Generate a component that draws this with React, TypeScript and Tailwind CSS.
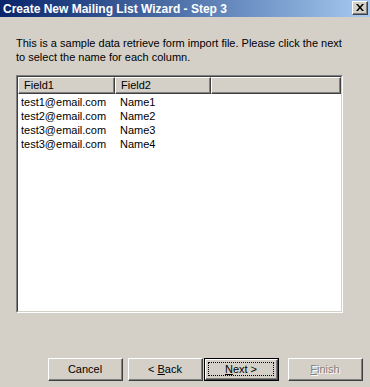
import React from "react";

const font = { fontFamily: '"Liberation Sans", Arial, sans-serif' };

const rows = [
  ["test1@email.com", "Name1"],
  ["test2@email.com", "Name2"],
  ["test3@email.com", "Name3"],
  ["test3@email.com", "Name4"],
];

function Raised({ children, className = "" }: { children?: React.ReactNode; className?: string }) {
  return (
    <div className={"border-t border-l border-t-white border-l-white border-r border-b border-r-[#404040] border-b-[#404040] " + className}>
      <div className="flex h-full w-full items-center justify-center border-r border-b border-r-[#808080] border-b-[#808080]">
        {children}
      </div>
    </div>
  );
}

function Btn({ children, disabled }: { children: React.ReactNode; disabled?: boolean }) {
  return (
    <Raised className="h-[23px] w-[75px] bg-[#d4d0c8]">
      <span className={disabled ? "text-[11px] text-[#808080] [text-shadow:1px_1px_0_#fff]" : "text-[11px] text-black"}>{children}</span>
    </Raised>
  );
}

function HeaderCell({ label, className = "" }: { label?: string; className?: string }) {
  return (
    <div className={"h-[17px] border-t border-l border-t-white border-l-white border-r border-b border-r-[#404040] border-b-[#404040] " + className}>
      <div className="flex h-full items-center border-r border-b border-r-[#808080] border-b-[#808080] pl-[5px] text-[11px]">
        {label}
      </div>
    </div>
  );
}

export default function App() {
  return (
    <div className="flex h-[387px] w-[370px] flex-col overflow-hidden bg-[#d4d0c8] text-black" style={font}>
      <div className="flex h-[17px] items-center justify-between bg-gradient-to-r from-[#0a246a] to-[#a6caf0] pl-[3px] pr-[2px]">
        <span className="text-[12px] font-bold leading-none text-white">Create New Mailing List Wizard - Step 3</span>
        <Raised className="mt-[1px] h-[14px] w-[16px] self-start bg-[#d4d0c8]">
          <svg width="8" height="7" viewBox="0 0 8 7">
            <path d="M0 0h2l2 2.5L6 0h2L5 3.5 8 7H6L4 4.5 2 7H0l3-3.5z" fill="#000" />
          </svg>
        </Raised>
      </div>

      <p className="mt-[19px] ml-[16px] w-[326px] text-[11px] leading-[14px]">
        This is a sample data retrieve form import file. Please click the next to select the name for each column.
      </p>

      <div className="mt-[11px] ml-[16px] h-[238px] w-[327px] border-t border-l border-t-[#808080] border-l-[#808080] border-r border-b border-r-white border-b-white">
        <div className="flex h-full w-full flex-col border-t border-l border-t-[#404040] border-l-[#404040] border-r border-b border-r-[#d4d0c8] border-b-[#d4d0c8] bg-white">
          <div className="flex bg-[#d4d0c8]">
            <HeaderCell label="Field1" className="w-[97px]" />
            <HeaderCell label="Field2" className="w-[96px]" />
            <HeaderCell className="flex-1" />
          </div>
          <div className="pt-[1px]">
            {rows.map((r, i) => (
              <div key={i} className="flex h-[14px] items-center text-[11px]">
                <span className="w-[102px] pl-[3px]">{r[0]}</span>
                <span>{r[1]}</span>
              </div>
            ))}
          </div>
        </div>
      </div>

      <div className="mt-[45px] ml-[48px] flex">
        <Btn>Cancel</Btn>
        <div className="ml-[5px]">
          <Btn>
            &lt; <u>B</u>ack
          </Btn>
        </div>
        <div className="ml-[1px] h-[23px] w-[75px] border border-black">
          <div className="h-full w-full border-t border-l border-t-white border-l-white border-r border-b border-r-[#404040] border-b-[#404040]">
            <div className="flex h-full w-full items-center justify-center border-r border-b border-r-[#808080] border-b-[#808080] p-[2px]">
              <div className="flex h-full w-full items-center justify-center border border-dotted border-black text-[11px]">
                <u>N</u>ext &gt;
              </div>
            </div>
          </div>
        </div>
        <div className="ml-[9px]">
          <Btn disabled>
            <u>F</u>inish
          </Btn>
        </div>
      </div>
    </div>
  );
}
